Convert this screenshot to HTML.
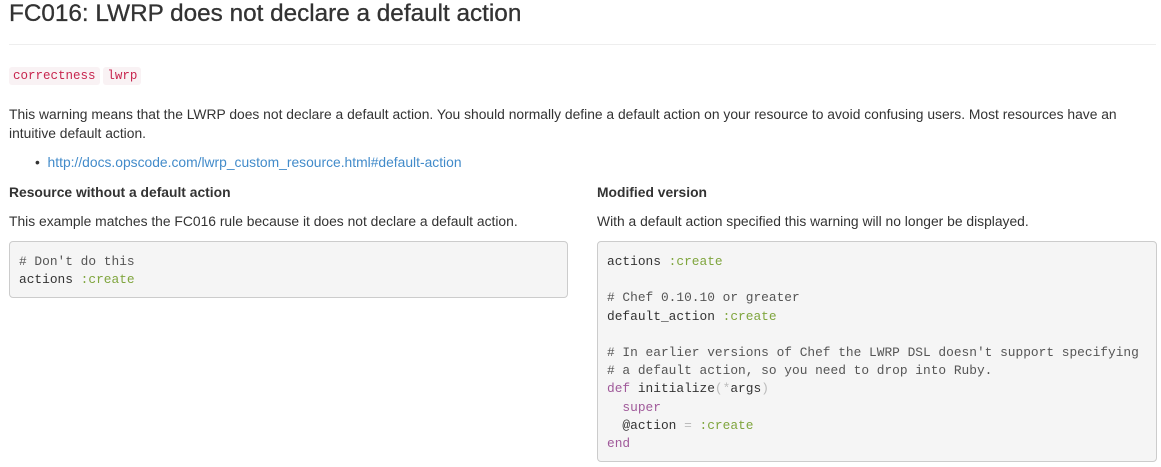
<!DOCTYPE html>
<html><head><style>
body{margin:0;background:#fff;font-family:"Liberation Sans",sans-serif;color:#333;font-size:13.85px;}
.w{position:relative;width:1161px;height:467px;}
.a{position:absolute;white-space:nowrap;}
h1{position:absolute;left:9px;top:0;margin:0;font-size:24.3px;font-weight:normal;line-height:28px;color:#333;-webkit-text-stroke:0.3px #333;}
.hr{position:absolute;left:9px;top:44px;width:1147px;height:1px;background:#eee;}
.tag{font-family:"Liberation Mono",monospace;font-size:12.5px;color:#c7254e;background:#f9f2f4;border-radius:3px;padding:2px 4px;}
a{color:#428bca;text-decoration:none;}
pre{position:absolute;margin:0;background:#f5f5f5;border:1px solid #ccc;border-radius:4px;font-family:"Liberation Mono",monospace;font-size:12.85px;line-height:18.2px;color:#333;padding:11px 9px 10px;box-sizing:border-box;}
.s{color:#7fa53d}.c{color:#555}.k{color:#a05a9a}.p{color:#bbb}
</style></head><body><div class="w">
<h1>FC016: LWRP does not declare a default action</h1>
<div class="hr"></div>
<div class="a" style="left:9px;top:66px;"><span class="tag">correctness</span> <span class="tag">lwrp</span></div>
<div class="a" style="left:9px;top:105px;line-height:19px;">This warning means that the LWRP does not declare a default action. You should normally define a default action on your resource to avoid confusing users. Most resources have an<br>intuitive default action.</div>
<div class="a" style="left:35px;top:153px;line-height:19px;">•&nbsp; <a>http://docs.opscode.com/lwrp_custom_resource.html#default-action</a></div>
<div class="a" style="left:9px;top:183px;font-weight:bold;line-height:19px;">Resource without a default action</div>
<div class="a" style="left:597px;top:183px;font-weight:bold;line-height:19px;">Modified version</div>
<div class="a" style="left:9px;top:212px;line-height:19px;">This example matches the FC016 rule because it does not declare a default action.</div>
<div class="a" style="left:597px;top:212px;line-height:19px;">With a default action specified this warning will no longer be displayed.</div>
<pre style="left:9px;top:241px;width:559px;height:57px;"><span class="c"># Don't do this</span>
actions <span class="s">:create</span></pre>
<pre style="left:597px;top:241px;width:560px;height:221px;">actions <span class="s">:create</span>

<span class="c"># Chef 0.10.10 or greater</span>
default_action <span class="s">:create</span>

<span class="c"># In earlier versions of Chef the LWRP DSL doesn't support specifying</span>
<span class="c"># a default action, so you need to drop into Ruby.</span>
<span class="k">def</span> initialize<span class="p">(*</span>args<span class="p">)</span>
  <span class="k">super</span>
  @action <span class="p">=</span> <span class="s">:create</span>
<span class="k">end</span></pre>
</div></body></html>
